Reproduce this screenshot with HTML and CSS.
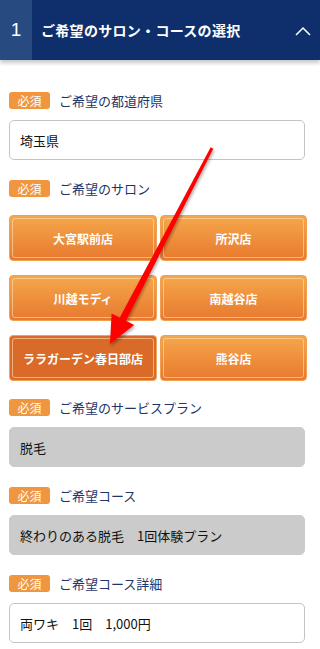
FILE: index.html
```html
<!DOCTYPE html>
<html lang="ja">
<head>
    <meta charset="UTF-8">
    <meta name="viewport" content="width=device-width, initial-scale=1.0">
    <title>ご希望のサロン・コースの選択</title>
    <link rel="stylesheet" href="styles.css">
</head>
<body>
    <div class="step-header">
        <div class="step-num">1</div>
        <div class="step-title">ご希望のサロン・コースの選択</div>
        <svg class="step-toggle" width="16" height="10" viewBox="0 0 16 10">
            <polyline points="1,9 8,2 15,9" fill="none" stroke="#fff" stroke-width="1.5"/>
        </svg>
    </div>

    <div class="form-body">
        <div class="form-group">
            <div class="form-label"><span class="badge">必須</span>ご希望の都道府県</div>
            <div class="field">埼玉県</div>
        </div>

        <div class="form-group">
            <div class="form-label"><span class="badge">必須</span>ご希望のサロン</div>
            <div class="salon-grid">
                <button class="salon-btn">大宮駅前店</button>
                <button class="salon-btn">所沢店</button>
                <button class="salon-btn">川越モディ</button>
                <button class="salon-btn">南越谷店</button>
                <button class="salon-btn active">ララガーデン春日部店</button>
                <button class="salon-btn">熊谷店</button>
            </div>
        </div>

        <div class="form-group">
            <div class="form-label"><span class="badge">必須</span>ご希望のサービスプラン</div>
            <div class="field disabled">脱毛</div>
        </div>

        <div class="form-group">
            <div class="form-label"><span class="badge">必須</span>ご希望コース</div>
            <div class="field disabled">終わりのある脱毛　1回体験プラン</div>
        </div>

        <div class="form-group">
            <div class="form-label"><span class="badge">必須</span>ご希望コース詳細</div>
            <div class="field">両ワキ　1回　1,000円</div>
        </div>
    </div>

    <!-- annotation arrow -->
    <svg class="pointer" width="320" height="649" viewBox="0 0 320 649">
        <defs>
            <filter id="shadow" x="-20%" y="-20%" width="140%" height="140%">
                <feDropShadow dx="1" dy="2" stdDeviation="1.5" flood-color="#000" flood-opacity="0.35"/>
            </filter>
        </defs>
        <polygon points="210.7,147.3 213.3,148.7 126.0,320.8 134.2,325.0 110,344 111.6,313.4 119.8,317.6" fill="#ff0000" filter="url(#shadow)"/>
    </svg>
</body>
</html>
```

FILE: styles.css
```css
* {
    margin: 0;
    padding: 0;
    box-sizing: border-box;
}

body {
    font-family: "Noto Sans CJK JP", "Noto Sans", sans-serif;
    background: #fff;
    color: #222;
    width: 320px;
    min-height: 649px;
    position: relative;
    overflow: hidden;
}

.step-header {
    display: flex;
    align-items: center;
    height: 60px;
    background: #0e2f6b;
    color: #fff;
    box-shadow: 0 3px 4px rgba(0, 0, 0, 0.22);
}

.step-num {
    width: 32px;
    height: 100%;
    background: #274a80;
    display: flex;
    align-items: center;
    justify-content: center;
    font-family: "Liberation Sans", Arial, sans-serif;
    font-size: 19px;
}

.step-title {
    flex: 1;
    padding-left: 9px;
    font-size: 14px;
    font-weight: bold;
    letter-spacing: 0.3px;
}

.step-toggle {
    margin-right: 9px;
    margin-top: 2px;
}

.form-body {
    padding: 32px 15px 0 9px;
}

.form-group {
    margin-bottom: 20px;
}

.form-label {
    display: flex;
    align-items: center;
    height: 17px;
    margin-bottom: 11px;
    font-size: 13px;
    color: #1d356b;
}

.badge {
    display: inline-flex;
    align-items: center;
    justify-content: center;
    width: 41px;
    height: 17px;
    margin-right: 9px;
    background: #f0963f;
    color: #fff;
    font-size: 12px;
    border-radius: 3px;
}

.field {
    height: 40px;
    display: flex;
    align-items: center;
    padding: 0 10px;
    border: 1px solid #c4c4c4;
    border-radius: 5px;
    font-size: 13px;
    color: #111;
}

.field.disabled {
    background: #cbcbcb;
    border-color: #cbcbcb;
}

.salon-grid {
    display: grid;
    grid-template-columns: 148px 147px;
    column-gap: 3px;
    row-gap: 14px;
    margin-top: 18px;
    margin-right: -2px;
    margin-bottom: -2px;
}

.salon-btn {
    height: 46px;
    border: 1px solid #f0a050;
    border-radius: 4px;
    background: linear-gradient(to bottom, #f5a74a, #e8792f);
    color: #fff;
    font-family: "Noto Sans CJK JP", sans-serif;
    font-size: 12px;
    font-weight: bold;
    position: relative;
    cursor: pointer;
}

.salon-btn::after {
    content: "";
    position: absolute;
    inset: 2px;
    border: 1px solid rgba(255, 225, 190, 0.6);
    border-radius: 3px;
}

.salon-btn.active {
    background: #d96a27;
    border-color: #efa45a;
}

.pointer {
    position: absolute;
    left: 0;
    top: 0;
    pointer-events: none;
}
```
